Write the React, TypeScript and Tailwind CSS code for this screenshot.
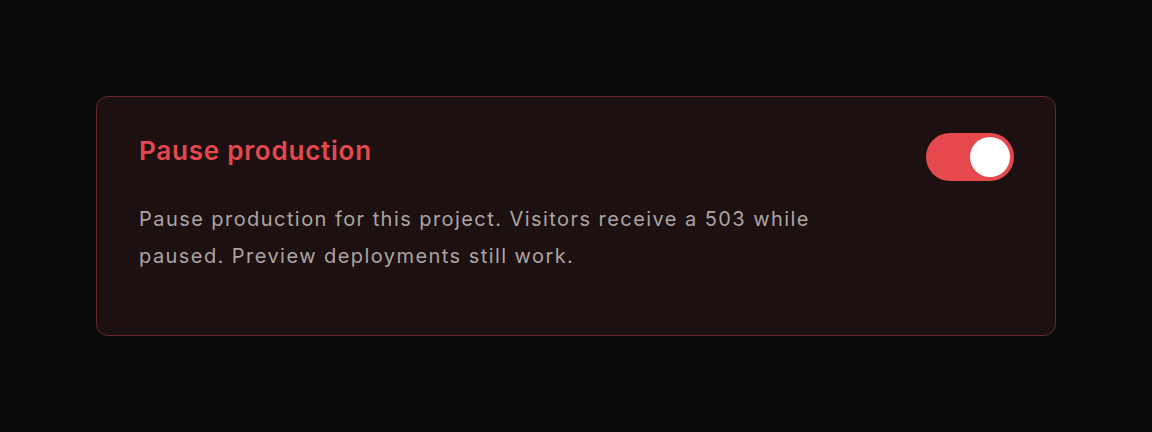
import React from "react";

export default function App() {
  const [on, setOn] = React.useState(true);
  return (
    <div
      className="min-h-[432px] w-full bg-[#0a0a0a] flex justify-center pt-[96px]"
      style={{ fontFamily: "Inter, 'Noto Sans', sans-serif" }}
    >
      <div className="w-[960px] h-[240px] rounded-[12px] border border-[#652729] bg-[#1c1011] px-10 pt-9">
        <div className="flex items-start justify-between">
          <h2 className="mt-[2px] pl-[2px] text-[26px] leading-[32px] font-semibold text-[#e5484d] tracking-[0.03em]">
            Pause production
          </h2>
          <button
            onClick={() => setOn(!on)}
            className={`mr-[1px] w-[88px] h-[48px] rounded-full p-[4px] flex ${on ? "justify-end bg-[#e5484d]" : "justify-start bg-[#3a2a2b]"}`}
          >
            <span className="block w-[40px] h-[40px] rounded-full bg-white" />
          </button>
        </div>
        <p className="mt-5 pl-[2px] max-w-[720px] text-[20px] leading-[37px] text-[#aca4a3] tracking-[0.072em]">
          Pause production for this project. Visitors receive a 503 while paused. Preview deployments still work.
        </p>
      </div>
    </div>
  );
}
